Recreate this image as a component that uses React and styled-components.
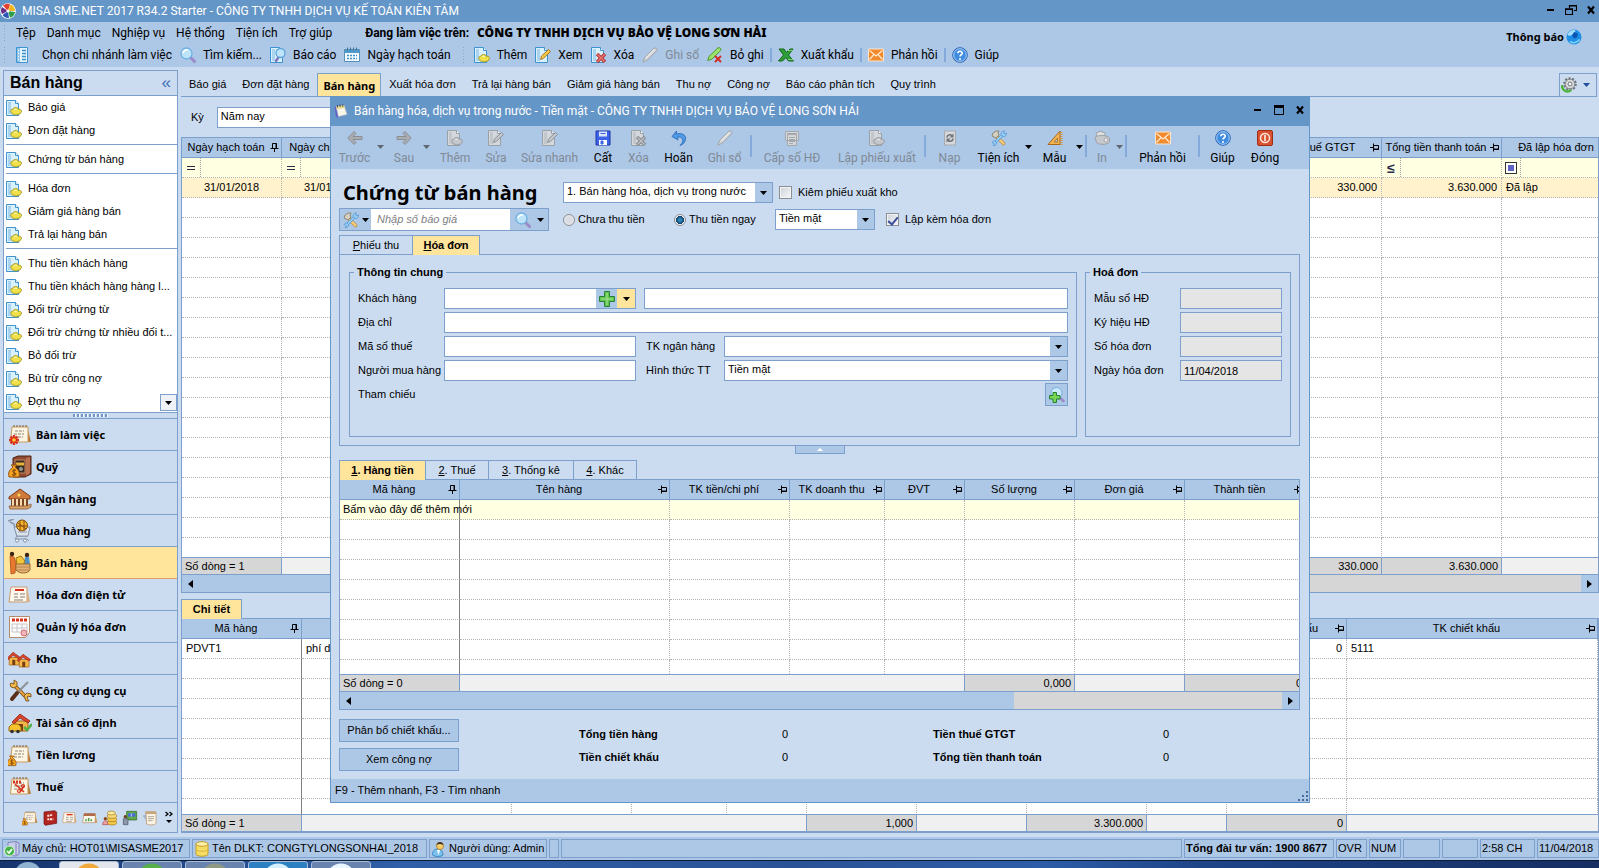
import React from 'react'
import styled, { createGlobalStyle, css } from 'styled-components'

/* ---------- icons ---------- */

const Svg = ({ size = 16, box = 16, children }) => (
    <svg width={size} height={size} viewBox={`0 0 ${box} ${box}`} aria-hidden="true">{children}</svg>
)

const tone = (gray) => gray
    ? { line: '#98A0A8', fill: '#D4D8DC', spot: '#C4C8CC', spotLine: '#93989D' }
    : { line: '#3E93CF', fill: '#D9F0FD', spot: '#F1E04A', spotLine: '#A39A22' }

const Page = ({ c }) => (
    <>
        <path d="M.5 .5h9l3 3v12h-12z" fill={c.fill} stroke={c.line} />
        <path d="M2 2h3v12H2z" fill={c.line} opacity=".3" />
        <path d="M9.500 .5v3h3" fill="#fff" stroke={c.line} />
    </>
)

const DocIcon = ({ gray }) => {
    const c = tone(gray)
    return (
        <Svg>
            <Page c={c} />
            <path d="M5 10.500c0-1 1-1.500 1.800-1.200C7.500 7 12 7 12.300 9.300c1.500-.3 3.200.5 3.200 1.900s-.7 1.300-1 1.500c-.3 1.600-1.800 1.800-2.600 1.400-.8 1.200-3.100 1.200-3.700 0C6.500 14.500 5.500 13.700 5.700 12.700 4.700 12 4.500 11 5 10.500z" fill={c.spot} stroke={c.spotLine} />
            <path d="M8 10c1-1 2-1 3 0" stroke="#fff" fill="none" opacity=".7" />
        </Svg>
    )
}

const EditDoc = ({ gray }) => (
    <Svg>
        <Page c={tone(gray)} />
        <path d="M5.500 12.500l1-3.500 7-6.500 2 2-7 6.800z" fill={gray ? '#C4C8CC' : '#F6C84A'} stroke={gray ? '#8C9196' : '#A67A26'} />
    </Svg>
)

const DeleteDoc = ({ gray }) => (
    <Svg>
        <Page c={tone(gray)} />
        <path d="M6 7l8 8M14 7l-8 8" stroke={gray ? '#85898D' : '#B73A3A'} strokeWidth="3.400" />
        <path d="M6.500 7.500l7 7M13.500 7.500l-7 7" stroke={gray ? '#C0C4C8' : '#E77A74'} strokeWidth="1.400" />
    </Svg>
)

const ListIcon = () => (
    <Svg>
        <path d="M1.500 .5h11v15h-11z" fill="#E4F3FD" stroke="#3E93CF" />
        <path d="M2 1h3v14H2z" fill="#8CC4EC" />
        <path d="M7 3.500h4M7 6.500h4M7 9.500h4M7 12.500h4" stroke="#3E8ECB" strokeWidth="1.400" />
        <path d="M3 3.500h1M3 6.500h1M3 9.500h1M3 12.500h1" stroke="#fff" strokeWidth="1.400" />
    </Svg>
)

const SearchIcon = () => (
    <Svg>
        <path d="M10.500 10.500l4 4" stroke="#9B8ACB" strokeWidth="3" strokeLinecap="round" />
        <circle cx="6.500" cy="6.500" r="5.500" fill="#BFE4FA" stroke="#6DB1E2" strokeWidth="1.300" />
        <path d="M3 6a4 4 0 0 1 5-3" stroke="#fff" strokeWidth="1.500" fill="none" />
    </Svg>
)

const ReportIcon = () => (
    <Svg>
        <Page c={tone()} />
        <path d="M9 9.500l-3 4.500" stroke="#8274BE" strokeWidth="2.400" strokeLinecap="round" />
        <circle cx="10.500" cy="6" r="4.500" fill="#BFE4FA" stroke="#5AA4DA" strokeWidth="1.300" />
    </Svg>
)

const CalendarIcon = () => (
    <Svg>
        <path d="M.5 2.500h15v12H.5z" fill="#F4FAFE" stroke="#5690B8" />
        <path d="M1 3h14v3H1z" fill="#4E9ACB" />
        <path d="M3.500 .5v3M6.500 .5v3M9.500 .5v3M12.500 .5v3" stroke="#3F7398" />
        <path d="M3 8.500h10M3 11.500h10" stroke="#3E93CF" strokeWidth="1.600" strokeDasharray="2 1" />
    </Svg>
)

const PencilIcon = () => (
    <Svg>
        <path d="M1 15l1.500-4.500L12 1c2-.5 3.200.8 2.800 2.600L5.300 13.200z" fill="#CFD2D5" stroke="#A0A5AA" />
        <path d="M4 11l8.500-8.500" stroke="#E8EAEC" strokeWidth="1.300" />
    </Svg>
)

const PencilX = () => (
    <Svg>
        <path d="M.8 13.500l1.200-4L11 .8c2-.5 3.200.8 2.800 2.600L5 12z" fill="#9BE36A" stroke="#4B9A2C" />
        <path d="M8 9l6 6M14 9l-6 6" stroke="#D22B23" strokeWidth="1.900" />
    </Svg>
)

const ExcelIcon = () => (
    <Svg>
        <path d="M1 2h5l2.500 3.500L12 2h3L10.500 8l5 6h-5L8 10.500 4.500 14H.5l5-6z" fill="#2E9E37" stroke="#14661D" />
        <path d="M9 3.500h6M10 12.500h5" stroke="#7FCB78" />
    </Svg>
)

const MailIcon = () => (
    <Svg>
        <path d="M.5 2h15v12H.5z" fill="#F08A2C" stroke="#FCE5CC" />
        <path d="M1.500 3.500L8 9l6.500-5.500M1.500 12.500l4.500-5M14.500 12.500l-4.500-5" fill="none" stroke="#FFE9D2" strokeWidth="1.200" />
    </Svg>
)

const HelpIcon = () => (
    <Svg>
        <circle cx="8" cy="8" r="7.300" fill="#3F8BE0" stroke="#2B62AE" />
        <circle cx="8" cy="8" r="6.300" fill="none" stroke="#A9D0FA" />
        <path d="M5.800 6.200C6 3.500 10.500 3.700 10.200 6.300 10 7.800 8 7.800 8 9.600" fill="none" stroke="#fff" strokeWidth="1.600" />
        <circle cx="8" cy="12" r="1" fill="#fff" />
    </Svg>
)

const ArrowIcon = ({ flip }) => (
    <Svg>
        <g transform={flip ? 'translate(16 0) scale(-1 1)' : undefined}>
            <path d="M.8 8L7 1.500 9 3.500 6 6.500h9v3H6l3 3-2 2z" fill="#A9ADB1" stroke="#8A8F94" />
        </g>
    </Svg>
)

const FloppyIcon = () => (
    <Svg>
        <path d="M1 1h14v14H1z" fill="#3D62E8" stroke="#1D35A8" />
        <path d="M4 1.500h8v5H4z" fill="#DCE6FB" />
        <path d="M4 10h8v5H4z" fill="#fff" />
        <path d="M5.500 3.500h5M6 11h2v3H6z" stroke="#3D62E8" fill="#3D62E8" />
    </Svg>
)

const UndoIcon = () => (
    <Svg>
        <path d="M5.500 1v3C11 2.500 15.500 5 14.500 9.500c-.5 3-2.500 5-5.500 6 2.500-2.500 3.500-4.500 2.500-6.500-1-1.800-3-2.300-5-1.700L7 10 1 6.500z" fill="#4E9AE6" stroke="#2766B4" strokeWidth=".8" />
    </Svg>
)

const SheetIcon = () => (
    <Svg>
        <path d="M1.500 1.500h13v9h-13zM3.500 4.500h9v11h-9z" fill="#D6D9DC" stroke="#A4A8AC" />
        <path d="M3 3.500h10M5 7.500h6M5 9.500h6M5 11.500h6M5 13.500h4" stroke="#A4A8AC" />
    </Svg>
)

const RefreshIcon = () => (
    <Svg>
        <path d="M2.500 1h11v14h-11z" fill="#D6D9DC" stroke="#A6AAAE" />
        <path d="M5 7.500C5 5 8 4 10 5.500M11 8.500c0 2.500-3 3.500-5 2" fill="none" stroke="#6F7479" strokeWidth="1.600" />
        <path d="M11.500 3.500v4h-4zM4.500 12.500v-4h4z" fill="#6F7479" />
    </Svg>
)

const ToolsIcon = () => (
    <Svg>
        <path d="M6.500 7.500l6 6" stroke="#C0924A" strokeWidth="3.600" strokeLinecap="round" />
        <path d="M6.500 7.500l6 6" stroke="#F6D07A" strokeWidth="2" strokeLinecap="round" />
        <path d="M1 6l1-3 3-2h3l-1 2 1 2-3 3-2-1z" fill="#D5CFC0" stroke="#857E6D" strokeWidth=".9" />
        <path d="M11 5.500L4.500 12" stroke="#4D96D4" strokeWidth="2.600" />
        <path d="M11 5.500L4.500 12" stroke="#A8D6F6" strokeWidth="1.200" />
        <path d="M10 4c0-2 2-3.500 3.500-3L12.500 3l1 1 2-1c.5 2-1.500 4-3.500 3.500zM1 12.500c1-2 4-2 4.500.5 0 2-2.500 3-3.500 2.500l1.500-1.500-1-1z" fill="#9CD0F4" stroke="#4D96D4" strokeWidth=".8" />
    </Svg>
)

const RulerIcon = () => (
    <Svg>
        <path d="M1 14.500L13 1v13.500z" fill="#F2B352" stroke="#A8691C" />
        <path d="M7 12l3.500-4v4z" fill="#ADC8E6" stroke="#A8691C" strokeWidth=".8" />
        <path d="M14.500 2v13" stroke="#D99435" strokeWidth="2" strokeDasharray="1 1" />
    </Svg>
)

const PrinterIcon = () => (
    <Svg>
        <path d="M3 7L2 3.500 6 1l5 2v4z" fill="#DDDFE1" stroke="#9DA1A5" />
        <path d="M1 7.500C3 5 13 4.500 15.500 8v4c-2 3-11 3-13 .5z" fill="#C6C9CC" stroke="#9DA1A5" />
        <circle cx="12" cy="10" r="2" fill="#E6E8EA" stroke="#A6AAAE" />
    </Svg>
)

const PowerIcon = () => (
    <Svg>
        <rect x=".5" y=".5" width="15" height="15" rx="1.500" fill="#D9512F" stroke="#9E2F17" />
        <circle cx="8" cy="8" r="4.500" fill="none" stroke="#FFE7DC" strokeWidth="1.500" />
        <path d="M8 5v6" stroke="#FFE7DC" strokeWidth="1.700" />
    </Svg>
)

const PlusIcon = () => (
    <Svg>
        <path d="M5.500 .5h5v5h5v5h-5v5h-5v-5h-5v-5h5z" fill="#62C44E" stroke="#258235" />
        <path d="M8 2v12M2 8h12" stroke="#A6E596" />
    </Svg>
)

const SearchPlus = () => (
    <Svg>
        <path d="M11 11l3.500 3" stroke="#9B8ACB" strokeWidth="2.600" strokeLinecap="round" />
        <circle cx="7.500" cy="6" r="5.500" fill="#C9E9FB" stroke="#76AFDB" />
        <path d="M4 5.500h3.500v3H11V12H7.500v3.500H4V12H.5V8.500H4z" fill="#7AD552" stroke="#258235" />
    </Svg>
)

const GlobeIcon = () => (
    <Svg>
        <circle cx="8" cy="8" r="7.500" fill="#1F8FE6" />
        <path d="M1.500 6C2 3 5 .8 8.500 1c2 1 0 3-2 4.500S3 7 1.500 6z" fill="#A6DDFB" />
        <path d="M8 3l4 1.500-1 4-3 1-2-3z" fill="#0D55B5" />
        <path d="M4 12.500c3 2 7 1.500 9.500-2" stroke="#7DD0FA" strokeWidth="1.600" fill="none" />
    </Svg>
)

const GearIcon = () => (
    <Svg>
        <circle cx="9" cy="7" r="5.800" fill="none" stroke="#6D7276" strokeWidth="2" strokeDasharray="2 1.600" />
        <circle cx="9" cy="7" r="4.800" fill="#DADCDE" stroke="#7C8084" />
        <circle cx="9" cy="7" r="2" fill="#F6F8FA" stroke="#6D7276" />
        <path d="M1 8c-.5 5 5 8.500 9 5" fill="none" stroke="#4FB43A" strokeWidth="2.400" />
    </Svg>
)

const LogoIcon = () => (
    <Svg size={16}>
        <circle cx="8" cy="8" r="7.800" fill="#fff" />
        <path d="M8 8L3 2.500A7 7 0 0 1 10 1.200z" fill="#E8402E" />
        <path d="M8 8l2.500-6.500A7 7 0 0 1 15 8z" fill="#F4B81E" />
        <path d="M8 8l7 1a7 7 0 0 1-5 5.800z" fill="#2F9E49" />
        <path d="M8 8l1 7a7 7 0 0 1-6.500-3z" fill="#2C59B8" />
        <path d="M8 8l-6 3a7 7 0 0 1 0-7z" fill="#6A2E86" />
        <circle cx="8" cy="8" r="1.600" fill="#fff" />
    </Svg>
)

const NotepadIcon = () => (
    <Svg size={14}>
        <path d="M.5 3.500l2 12 6-1-5-12z" fill="#5F62C8" />
        <path d="M2.500 3l9-1.500 3.500 10.500-10 2.500z" fill="#F8F8E8" stroke="#A9A9C8" strokeWidth=".8" />
        <path d="M2.500 3l9-1.500.8 3-9 1.600z" fill="#EADB8A" />
        <path d="M4 1v3M7 .5v3M10 .2v3" stroke="#38414A" />
    </Svg>
)

const ServerIcon = () => (
    <Svg>
        <path d="M4 1.500l8-1 3 1.500v11l-3 2-8-1z" fill="#C9CDEB" stroke="#7F84B8" />
        <path d="M12 1v13" stroke="#7F84B8" />
        <circle cx="5.500" cy="10" r="5" fill="#46B548" stroke="#DFF3DF" />
        <path d="M3 10l2 2 3-4" stroke="#fff" strokeWidth="1.700" fill="none" />
    </Svg>
)

const DbIcon = () => (
    <Svg>
        <path d="M2 3v10c0 3 12 3 12 0V3z" fill="#F5DC63" stroke="#C39D27" />
        <ellipse cx="8" cy="3" rx="6" ry="2.300" fill="#FCF0A8" stroke="#C39D27" />
        <path d="M2 8c0 3 12 3 12 0" fill="none" stroke="#D9B640" />
    </Svg>
)

const UserIcon = () => (
    <Svg>
        <path d="M1.500 14c0-4 2-6 5-6s5.500 2 5.500 6c-2 2-8 2-10.500 0z" fill="#7CC0EE" stroke="#3B87C4" />
        <circle cx="9" cy="5" r="3.500" fill="#F8CE6A" stroke="#A97C22" strokeWidth=".8" />
        <path d="M5.500 4C6 0 12 0 12.500 4 10 3 8 2.500 5.500 4z" fill="#3E3226" />
        <path d="M6 9l1.500 5L9 9z" fill="#fff" />
    </Svg>
)

const Caret = ({ color = '#000' }) => (
    <svg width="7" height="4" viewBox="0 0 7 4" aria-hidden="true"><path d="M0 0h7L3.500 4z" fill={color} /></svg>
)

const SideArrow = ({ flip }) => (
    <svg width="5" height="8" viewBox="0 0 5 8" aria-hidden="true">
        <path d={flip ? 'M0 0v8l5-4z' : 'M5 0v8L0 4z'} />
    </svg>
)

// upright when the column is frozen, lying on its side otherwise
const Pin = ({ fixed }) => (
    <svg width="9" height="9" viewBox="0 0 9 9" aria-hidden="true">
        {fixed
            ? <path d="M2.500 5.500v-5h4v5M6 0v6M.5 5.500h8M4.500 6v3" fill="none" stroke="#000" />
            : <path d="M3.500 2.500h5v4h-5M3 6h6M3.500 .5v8M0 4.500h3" fill="none" stroke="#000" />}
    </svg>
)

/* navigation pictures, 24 x 24 */

const Note = ({ children }) => (
    <>
        <path d="M19 3l4 16h-4z" fill="#B77A34" />
        <path d="M4 4h16v15H2.500z" fill="#FDF5E4" stroke="#C79A5E" />
        <path d="M6 4V2M9 4V2M12 4V2M15 4V2M18 4V2" stroke="#7A5A38" />
        <path d="M7 8h9M6 11h10M6 14h9" stroke="#8E8272" strokeDasharray="3 1" />
        {children}
    </>
)

const Bag = () => (
    <>
        <path d="M5 12l-2-2h6l-2 2c4 3 5 6 4 10H1c-1-4 0-7 4-10z" fill="#F5A623" stroke="#96500E" />
        <path d="M8 15.500c-2-1.500-4 0-3 1.500s3 .5 3 2-2.500 1.500-4 .5M6 14v7" fill="none" stroke="#7A3E08" />
    </>
)

const House = () => (
    <>
        <path d="M3 10h13v10H3z" fill="#F4B84A" stroke="#A8641C" />
        <path d="M0 11L8 3l10 7-2 2-8-5-6 6z" fill="#D9452B" stroke="#8E2312" strokeWidth=".8" />
        <path d="M7 13h4v7H7z" fill="#7A3E12" />
    </>
)

const navArt = {
    desk: <Note><path d="M6 12v10M1 17h10M2.500 13.500l7 7M9.500 13.500l-7 7" stroke="#D8321C" strokeWidth="2.400" /><circle cx="6" cy="17" r="1.800" fill="#FFC93C" /></Note>,
    safe: <><path d="M5 3l5-2h13v18l-6 3H5z" fill="#8E4B32" stroke="#4E2214" /><path d="M18 3l4-1v16l-4 3z" fill="#B9714E" /><path d="M7 5h10v13H7z" fill="#3A2A20" stroke="#C98A62" /><path d="M8 9h8" stroke="#E6B23C" strokeWidth="3" /><circle cx="13" cy="14" r="2" fill="#8D9A90" /><Bag /></>,
    bank: <><path d="M1 10L12 2l10 7v3H1z" fill="#D07A3C" stroke="#7E3C14" /><path d="M3 12h17v7H3z" fill="#7A4324" /><path d="M5 12v7M9 12v7M13 12v7M17 12v7" stroke="#F6DCAE" strokeWidth="2" /><path d="M1 19h18l4-2v3l-4 2H2z" fill="#D9A36B" stroke="#8E5730" strokeWidth=".8" /><circle cx="11" cy="8" r="1.500" fill="#FFD65A" /></>,
    cart: <><path d="M0 2l6-2M2 3l4 2 3 12h10l3-9" fill="none" stroke="#8B97AC" strokeWidth="1.600" /><path d="M6 8h16l-2 9H9z" fill="#DDE3EC" stroke="#8B97AC" /><circle cx="14" cy="6.500" r="5.500" fill="#F2B52B" stroke="#7A4A10" /><path d="M10 4l8 6M12 2v10M16 2v9M9 7h10" stroke="#8A4B10" /><path d="M10 13h9M9 17l-2 3h12l2 2" fill="none" stroke="#8B97AC" /><circle cx="9" cy="21.500" r="1.600" fill="#fff" stroke="#7E8FA8" /><circle cx="17" cy="21.500" r="1.600" fill="#fff" stroke="#7E8FA8" /></>,
    sell: <><circle cx="4" cy="3" r="2.200" fill="#3A2416" /><path d="M2 5l4 1 2 6-1 10-4 1z" fill="#E8782E" stroke="#9C4312" strokeWidth=".7" /><circle cx="19" cy="4" r="2.200" fill="#3A2416" /><path d="M17 6h4l1 7h-6z" fill="#4E93CE" /><path d="M8 7l5-2 4 5-2 4h-6z" fill="#F3C53A" stroke="#A37412" /><path d="M8 13h14v6c-2 4-11 4-14 0z" fill="#E2B274" stroke="#9A6630" /><path d="M9 16h12M9 19h12" stroke="#B9854C" /></>,
    einv: <><path d="M3 4h16v15H1z" fill="#FDF8EE" stroke="#C79A6E" /><path d="M19 4l3 15h-3z" fill="#D9B084" /><path d="M7 7h9" stroke="#D8321C" strokeWidth="2" /><path d="M6 11h4M12 11h5M6 14h4M12 14h5M6 17h9" stroke="#8A8078" /></>,
    inv: <><path d="M1.500 1.500h20v16l-4 5h-16z" fill="#FFFDFB" stroke="#B48A6C" /><path d="M4 5h15" stroke="#D8321C" strokeWidth="3" strokeDasharray="3 1" /><path d="M4 9h15v8H4zM4 13h15M9 9v8M14 9v8" fill="none" stroke="#C4C4CC" /><circle cx="16" cy="18" r="3" fill="#F3B6B8" stroke="#C96A70" /></>,
    stock: <><g transform="translate(-1 3) scale(.75)"><House /></g><g transform="translate(9 5) scale(.75)"><House /></g></>,
    tools: <><path d="M5 5l14 14" stroke="#7A4A1C" strokeWidth="3.800" /><path d="M5 5l14 14" stroke="#E9A13A" strokeWidth="2.200" /><path d="M2 5l1-1 3 1 0-4 3 2v4L6 9 3 8zM16 17l3-3 4 1 0 3-3-1-1 2 2 3-3 0z" fill="#F2B94C" stroke="#6E4414" strokeWidth=".8" /><path d="M20 3L9 14" stroke="#8C8F94" strokeWidth="2" /><path d="M9 14L4 20" stroke="#5A2E18" strokeWidth="4" strokeLinecap="round" /></>,
    asset: <><g transform="translate(4 0)"><House /></g><path d="M1 16l3-3h6l3 3v4H1z" fill="#F6C32E" stroke="#9A6A10" /><circle cx="4" cy="20.500" r="1.800" fill="#33302C" /><circle cx="10" cy="20.500" r="1.800" fill="#33302C" /><path d="M16 16l3 3 5-6" stroke="#53B04A" strokeWidth="2.500" fill="none" /></>,
    pay: <Note><g transform="translate(-1 5) scale(.8)"><Bag /></g></Note>,
    tax: <Note><path d="M5 7h9" stroke="#D8321C" strokeWidth="3" strokeDasharray="2 1" /><path d="M7 9l9 8M12 17l4-6" stroke="#D8321C" strokeWidth="1.600" /><circle cx="15" cy="11" r="1.500" fill="none" stroke="#D8321C" strokeWidth="1.200" /><circle cx="11" cy="16" r="1.500" fill="none" stroke="#D8321C" strokeWidth="1.200" /></Note>,
    book: <><path d="M3 3l16-2 3 2v17l-17 3-2-2z" fill="#B3231F" stroke="#6E100E" /><path d="M8 9l8-2M8 14h9" stroke="#FBE4DC" strokeWidth="3" strokeDasharray="3 1" /></>,
    chart: <><path d="M3 6h17v13H1z" fill="#FDF8EE" stroke="#B78A5E" /><path d="M3 5h17v4H2.500z" fill="#B06A4A" /><path d="M6 17v-3M10 17v-5M14 17v-3" stroke="#4E9E4A" strokeWidth="2.400" /><path d="M20 6l3 13h-4z" fill="#C99A64" /></>,
    coins: <><ellipse cx="15" cy="19" rx="7" ry="3.500" fill="#F6C94C" stroke="#9C7416" /><ellipse cx="15" cy="14" rx="7" ry="3.500" fill="#F6C94C" stroke="#9C7416" /><ellipse cx="15" cy="9" rx="7" ry="3.500" fill="#FADB78" stroke="#9C7416" /><ellipse cx="14" cy="4.500" rx="6" ry="3" fill="#FCE9A0" stroke="#9C7416" /><circle cx="5" cy="13" r="2.500" fill="#8A4A1C" /><path d="M1 22c0-8 8-8 8 0z" fill="#F0A0A0" stroke="#A84A4A" /></>,
    bus: <><path d="M7 2h15v13H7z" fill="#5FA84C" stroke="#2C6420" /><path d="M9 5h11v5H9z" fill="#4A6CD8" /><path d="M14 5v5" stroke="#fff" /><circle cx="5" cy="10" r="2.500" fill="#6E4320" /><path d="M2 13h7v9H2z" fill="#8E97A8" stroke="#4A5260" /></>,
    scroll: <><path d="M6 3h15v17c-1 3-12 3-14 1z" fill="#FBF4E4" stroke="#B28A5C" /><path d="M5 2h16v4H5z" fill="#C9A679" /><path d="M9 10h9M9 13h9M9 16h7" stroke="#8E8272" /><path d="M1 9l5-3v9z" fill="#A8B4C4" /></>,
}

/* ---------- data ---------- */

const menus = ['Tệp', 'Danh mục', 'Nghiệp vụ', 'Hệ thống', 'Tiện ích', 'Trợ giúp']

const pageTabs = ['Báo giá', 'Đơn đặt hàng', 'Bán hàng', 'Xuất hóa đơn', 'Trả lại hàng bán', 'Giảm giá hàng bán', 'Thu nợ', 'Công nợ', 'Báo cáo phân tích', 'Quy trình']

const linkGroups = [
    ['Báo giá', 'Đơn đặt hàng'],
    ['Chứng từ bán hàng'],
    ['Hóa đơn', 'Giảm giá hàng bán', 'Trả lại hàng bán'],
    ['Thu tiền khách hàng', 'Thu tiền khách hàng hàng l...', 'Đối trừ chứng từ', 'Đối trừ chứng từ nhiều đối t...', 'Bỏ đối trừ', 'Bù trừ công nợ', 'Đợt thu nợ'],
]

const navItems = [
    ['Bàn làm việc', 'desk'], ['Quỹ', 'safe'], ['Ngân hàng', 'bank'], ['Mua hàng', 'cart'],
    ['Bán hàng', 'sell'], ['Hóa đơn điện tử', 'einv'], ['Quản lý hóa đơn', 'inv'], ['Kho', 'stock'],
    ['Công cụ dụng cụ', 'tools'], ['Tài sản cố định', 'asset'], ['Tiền lương', 'pay'], ['Thuế', 'tax'],
]

const shortcuts = [['Giá thành', 'pay'], ['Tổng hợp', 'book'], ['Hợp đồng', 'einv'], ['Ngân sách', 'chart'], ['Cổ đông', 'coins'], ['Cửa hàng', 'bus'], ['Sổ sách', 'scroll']]

const dialogTools = [
    { label: 'Trước', icon: <ArrowIcon />, w: 45, off: true, menu: true },
    { label: 'Sau', icon: <ArrowIcon flip />, w: 38, off: true, menu: true },
    { label: 'Thêm', icon: <DocIcon gray />, w: 48, off: true },
    { label: 'Sửa', icon: <EditDoc gray />, w: 34, off: true },
    { label: 'Sửa nhanh', icon: <EditDoc gray />, w: 73, off: true },
    { label: 'Cất', icon: <FloppyIcon />, w: 34 },
    { label: 'Xóa', icon: <DeleteDoc gray />, w: 37, off: true },
    { label: 'Hoãn', icon: <UndoIcon />, w: 43 },
    { label: 'Ghi sổ', icon: <PencilIcon />, w: 49, off: true, end: true },
    { label: 'Cấp số HĐ', icon: <SheetIcon />, w: 78, off: true },
    { label: 'Lập phiếu xuất', icon: <DocIcon gray />, w: 92, off: true, end: true },
    { label: 'Nạp', icon: <RefreshIcon />, w: 45, off: true },
    { label: 'Tiện ích', icon: <ToolsIcon />, w: 53, menu: true },
    { label: 'Mẫu', icon: <RulerIcon />, w: 43, menu: true, end: true },
    { label: 'In', icon: <PrinterIcon />, w: 28, off: true, menu: true, end: true },
    { label: 'Phản hồi', icon: <MailIcon />, w: 69, end: true },
    { label: 'Giúp', icon: <HelpIcon />, w: 43 },
    { label: 'Đóng', icon: <PowerIcon />, w: 42 },
]

const saleCols = [
    { title: 'Ngày hạch toán', w: 100, fixed: true },
    { title: 'Ngày chứng từ', w: 100 },
    { title: '' },
    { title: 'Tiền thuế GTGT', w: 120 },
    { title: 'Tổng tiền thanh toán', w: 120 },
    { title: 'Đã lập hóa đơn', w: 120 },
]

const detailCols = [
    { title: 'Mã hàng', w: 120, fixed: true, frozen: true },
    { title: '', w: 210 },
    { title: '', w: 120 }, { title: '', w: 95 }, { title: '', w: 80 }, { title: '', w: 110 },
    { title: '', w: 110 }, { title: '', w: 120 }, { title: '', w: 80 },
    { title: 'Tiền chiết khấu', w: 120 },
    { title: 'TK chiết khấu' },
]

const itemCols = [
    { title: 'Mã hàng', w: 120, fixed: true, frozen: true },
    { title: 'Tên hàng' },
    { title: 'TK tiền/chi phí', w: 120 },
    { title: 'TK doanh thu', w: 95 },
    { title: 'ĐVT', w: 80 },
    { title: 'Số lượng', w: 110 },
    { title: 'Đơn giá', w: 110 },
    { title: 'Thành tiền', w: 121 },
]

/* ---------- data grid ---------- */

const DataGrid = ({ cols, rows = [], blanks, footer, filter, hint, scroll, over = 0, ...rest }) => {
    const group = (
        <colgroup>
            {cols.map((c, i) => <col key={i} width={c.w} />)}
        </colgroup>
    )
    const has = (i) => footer[i] !== undefined
    return (
        <GridBox {...rest}>
            <GridView>
                <GridTable $over={over}>
                    {group}
                    <thead>
                        <tr>
                            {cols.map((c, i) => (
                                <Th key={i}>
                                    <HeadCell><span>{c.title}</span>{c.title && <Pin fixed={c.fixed} />}</HeadCell>
                                </Th>
                            ))}
                        </tr>
                    </thead>
                    <tbody>
                        {filter && (
                            <Tr $bg="#FFFFE1">
                                {cols.map((c, i) => <Td key={i}><FilterCell><i>{filter[i]}</i></FilterCell></Td>)}
                            </Tr>
                        )}
                        {hint && (
                            <Tr $bg="#FFFFE1">
                                {cols.map((c, i) => <Td key={i} $frozen={c.frozen} $hint>{i === 0 && hint}</Td>)}
                            </Tr>
                        )}
                        {rows.map((r, n) => (
                            <Tr key={n} $bg={filter && '#FFF2CC'}>
                                {cols.map((c, i) => <Td key={i} $frozen={c.frozen} $align={r[i]?.align}>{r[i]?.text}</Td>)}
                            </Tr>
                        ))}
                        {Array.from({ length: blanks }, (_, n) => (
                            <Tr key={`b${n}`}>
                                {cols.map((c, i) => <Td key={i} $frozen={c.frozen} />)}
                            </Tr>
                        ))}
                    </tbody>
                </GridTable>
            </GridView>
            <GridFoot>
                <GridTable $over={over}>
                    {group}
                    <tbody>
                        <tr>
                            {cols.map((c, i) => <FootTd key={i} $sum={has(i)} $edge={has(i) || has(i + 1)} $left={i === 0}>{footer[i]}</FootTd>)}
                        </tr>
                    </tbody>
                </GridTable>
            </GridFoot>
            {scroll && (
                <ScrollBar>
                    <ScrollBtn aria-label="Cuộn trái"><SideArrow /></ScrollBtn>
                    <ScrollTrack $from={scroll} />
                    <ScrollBtn aria-label="Cuộn phải"><SideArrow flip /></ScrollBtn>
                </ScrollBar>
            )}
        </GridBox>
    )
}

const Combo = ({ value, id, label, $w }) => (
    <ComboBox $w={$w}>
        <select id={id} aria-label={label} defaultValue={value}>
            <option>{value}</option>
        </select>
        <ComboArrow><Caret /></ComboArrow>
    </ComboBox>
)

/* ---------- parts of the page ---------- */

const Sidebar = () => (
    <Side>
        <SideHead><h2>Bán hàng</h2><button aria-label="Thu gọn">«</button></SideHead>
        <SideList>
            {linkGroups.map((g, i) => (
                <ul key={i}>
                    {g.map((t) => <li key={t}><a href="#"><DocIcon />{t}</a></li>)}
                </ul>
            ))}
            <MoreBtn aria-label="Xem thêm"><Caret /></MoreBtn>
        </SideList>
        <Splitter><span /></Splitter>
        {navItems.map(([t, art]) => (
            <NavBtn key={t} $active={t === 'Bán hàng'}><Svg size={24} box={24}>{navArt[art]}</Svg>{t}</NavBtn>
        ))}
        <Shortcuts>
            {shortcuts.map(([t, art]) => <button key={t} aria-label={t}><Svg box={24}>{navArt[art]}</Svg></button>)}
            <button aria-label="Tùy chọn">
                <svg width="8" height="14" viewBox="0 0 8 14"><path d="M.5 1l2.500 2L.5 5M4.500 1L7 3 4.500 5" fill="none" stroke="#000" strokeWidth="1.300" /><path d="M1 9h6l-3 3z" /></svg>
            </button>
        </Shortcuts>
    </Side>
)

const SaleDialog = () => (
    <Dialog role="dialog" aria-label="Chứng từ bán hàng">
        <DialogTitle>
            <NotepadIcon />
            <span>Bán hàng hóa, dịch vụ trong nước - Tiền mặt - CÔNG TY TNHH DỊCH VỤ BẢO VỆ LONG SƠN HẢI</span>
            <WinButtons max gap />
        </DialogTitle>
        <DialogTools>
            {dialogTools.map((t) => (
                <React.Fragment key={t.label}>
                    <ToolBtn $w={t.w} disabled={t.off}>{t.icon}{t.label}</ToolBtn>
                    {t.menu && <ToolCaret aria-label={`${t.label} - thêm`}><Caret color={t.off ? '#5F676F' : '#000'} /></ToolCaret>}
                    {t.end && <ToolSep />}
                </React.Fragment>
            ))}
        </DialogTools>
        <DialogBody>
            <HeadRow>
                <h1>Chứng từ bán hàng</h1>
                <Combo value="1. Bán hàng hóa, dịch vụ trong nước" label="Loại chứng từ" $w={210} />
                <Check><input type="checkbox" />Kiêm phiếu xuất kho</Check>
            </HeadRow>
            <OptionRow>
                <Lookup>
                    <button aria-label="Tiện ích"><ToolsIcon /><Caret /></button>
                    <input placeholder="Nhập số báo giá" aria-label="Số báo giá" />
                    <button aria-label="Tìm"><SearchIcon /><Caret /></button>
                </Lookup>
                <Radio><input type="radio" name="pay" />Chưa thu tiền</Radio>
                <Radio><input type="radio" name="pay" defaultChecked />Thu tiền ngay</Radio>
                <Combo value="Tiền mặt" label="Phương thức thanh toán" $w={100} />
                <Check><input type="checkbox" defaultChecked />Lập kèm hóa đơn</Check>
            </OptionRow>
            <Tabs>
                <Tab $w={74}><u>P</u>hiếu thu</Tab>
                <Tab $w={67} $active><u>H</u>óa đơn</Tab>
            </Tabs>
            <Panel>
                <Group>
                    <legend>Thông tin chung</legend>
                    <CustomerGrid>
                        <label htmlFor="kh">Khách hàng</label>
                        <Picker>
                            <input id="kh" />
                            <button aria-label="Thêm khách hàng"><PlusIcon /></button>
                            <button aria-label="Chọn khách hàng"><Caret /></button>
                        </Picker>
                        <Field $from={4} aria-label="Tên khách hàng" />
                        <label htmlFor="dc">Địa chỉ</label>
                        <Field id="dc" $from={2} />
                        <label htmlFor="mst">Mã số thuế</label>
                        <Field id="mst" />
                        <SecondLabel htmlFor="tk">TK ngân hàng</SecondLabel>
                        <Combo id="tk" value="" />
                        <label htmlFor="nm">Người mua hàng</label>
                        <Field id="nm" />
                        <SecondLabel htmlFor="ht">Hình thức TT</SecondLabel>
                        <Combo id="ht" value="Tiền mặt" />
                        <span>Tham chiếu</span>
                        <RefBtn aria-label="Chọn tham chiếu"><SearchPlus /></RefBtn>
                    </CustomerGrid>
                </Group>
                <Group>
                    <legend>Hoá đơn</legend>
                    <InvoiceGrid>
                        <label htmlFor="ms">Mẫu số HĐ</label>
                        <Field id="ms" readOnly />
                        <label htmlFor="ky">Ký hiệu HĐ</label>
                        <Field id="ky" readOnly />
                        <label htmlFor="so">Số hóa đơn</label>
                        <Field id="so" readOnly />
                        <label htmlFor="ng">Ngày hóa đơn</label>
                        <Field id="ng" readOnly defaultValue="11/04/2018" />
                    </InvoiceGrid>
                </Group>
            </Panel>
            <Collapse aria-label="Thu gọn"><svg width="6" height="3" viewBox="0 0 6 3"><path d="M0 3h6L3 0z" fill="#fff" /></svg></Collapse>
            <Tabs>
                <Tab $w={87} $active><u>1</u>. Hàng tiền</Tab>
                <Tab $w={63}><u>2</u>. Thuế</Tab>
                <Tab $w={85}><u>3</u>. Thống kê</Tab>
                <Tab $w={63}><u>4</u>. Khác</Tab>
            </Tabs>
            <DataGrid
                $grow
                cols={itemCols}
                hint="Bấm vào đây để thêm mới"
                blanks={8}
                over={7}
                scroll={71}
                footer={{ 0: 'Số dòng = 0', 5: '0,000', 7: '0' }}
            />
            <Totals>
                <TotalButtons>
                    <button>Phân bổ chiết khấu...</button>
                    <button>Xem công nợ</button>
                </TotalButtons>
                <dl>
                    <div><dt>Tổng tiền hàng</dt><dd>0</dd></div>
                    <div><dt>Tiền chiết khấu</dt><dd>0</dd></div>
                </dl>
                <dl>
                    <div><dt>Tiền thuế GTGT</dt><dd>0</dd></div>
                    <div><dt>Tổng tiền thanh toán</dt><dd>0</dd></div>
                </dl>
            </Totals>
        </DialogBody>
        <DialogStatus>
            <span>F9 - Thêm nhanh, F3 - Tìm nhanh</span>
            <svg width="12" height="12" viewBox="0 0 12 12"><path d="M9 1h2v2H9zM5 5h2v2H5zM9 5h2v2H9zM1 9h2v2H1zM5 9h2v2H5zM9 9h2v2H9z" fill="#4A6A9C" /></svg>
        </DialogStatus>
    </Dialog>
)

const WinButtons = ({ max, gap }) => (
    <WinBox $gap={gap}>
        <button aria-label="Thu nhỏ"><svg width="12" height="12" viewBox="0 0 12 12"><path d="M2 5h7v2H2z" /></svg></button>
        <button aria-label="Phóng to">
            {max
                ? <svg width="12" height="12" viewBox="0 0 12 12"><path d="M1.500 2v8.500h9V2z" fill="none" stroke="#000" /><path d="M1 1h10v3H1z" /></svg>
                : <svg width="12" height="12" viewBox="0 0 12 12"><path d="M4.500 4V1.500h7v5H9M.5 5h7v5.500h-7z" fill="none" stroke="#000" strokeWidth="1.200" /><path d="M4 1h8v1.500H4zM0 4.500h8V6H0z" /></svg>}
        </button>
        <button aria-label="Đóng"><svg width="12" height="12" viewBox="0 0 12 12"><path d="M3 2.500l6 7M9 2.500l-6 7" stroke="#000" strokeWidth="2.200" /></svg></button>
    </WinBox>
)

const App = () => (
    <Page100>
        <Global />
        <TitleBar>
            <LogoIcon />
            <span>MISA SME.NET 2017 R34.2 Starter - CÔNG TY TNHH DỊCH VỤ KẾ TOÁN KIÊN TÂM</span>
            <WinButtons />
        </TitleBar>
        <Bars>
            <div>
                <MenuBar>
                    <Grip />
                    {menus.map((m) => <button key={m}>{m}</button>)}
                    <Branch>Đang làm việc trên:<b>CÔNG TY TNHH DỊCH VỤ BẢO VỆ LONG SƠN HẢI</b></Branch>
                </MenuBar>
                <ToolBar>
                    <Grip />
                    <button><ListIcon />Chọn chi nhánh làm việc</button>
                    <button><SearchIcon />Tìm kiếm...</button>
                    <button><ReportIcon />Báo cáo</button>
                    <button><CalendarIcon />Ngày hạch toán</button>
                    <Grip />
                    <button><DocIcon />Thêm</button>
                    <button><EditDoc />Xem</button>
                    <button><DeleteDoc />Xóa</button>
                    <button disabled><PencilIcon />Ghi sổ</button>
                    <button><PencilX />Bỏ ghi</button>
                    <BarSep />
                    <button><ExcelIcon />Xuất khẩu</button>
                    <BarSep />
                    <button><MailIcon />Phản hồi</button>
                    <BarSep />
                    <button><HelpIcon />Giúp</button>
                </ToolBar>
            </div>
            <Notice href="#">Thông báo<GlobeIcon /></Notice>
        </Bars>
        <Main>
            <Sidebar />
            <Content>
                <PageTabs>
                    {pageTabs.map((t) => <PageTab key={t} $active={t === 'Bán hàng'}>{t}</PageTab>)}
                    <GearBtn aria-label="Thiết lập"><GearIcon /><Caret color="#1F4E9E" /></GearBtn>
                </PageTabs>
                <Period>
                    <label htmlFor="period">Kỳ</label>
                    <Combo id="period" value="Năm nay" $w={180} />
                </Period>
                <DataGrid
                    $grow
                    cols={saleCols}
                    filter={{ 0: <Equal />, 1: <Equal />, 4: '≤', 5: <BoolMark /> }}
                    rows={[{
                        0: { text: '31/01/2018', align: 'center' },
                        1: { text: '31/01/2018', align: 'center' },
                        3: { text: '330.000', align: 'right' },
                        4: { text: '3.630.000', align: 'right' },
                        5: { text: 'Đã lập' },
                    }]}
                    blanks={18}
                    over={24}
                    scroll={60}
                    footer={{ 0: 'Số dòng = 1', 3: '330.000', 4: '3.630.000' }}
                />
                <DetailTabs><Tab $w={61} $active>Chi tiết</Tab></DetailTabs>
                <DataGrid
                    cols={detailCols}
                    rows={[{
                        0: { text: 'PDVT1' },
                        1: { text: 'phí dịch vụ' },
                        9: { text: '0', align: 'right' },
                        10: { text: '5111' },
                    }]}
                    blanks={8}
                    footer={{ 0: 'Số dòng = 1', 5: '1,000', 7: '3.300.000', 9: '0' }}
                />
            </Content>
            <SaleDialog />
        </Main>
        <StatusBar>
            <Pane $w={188}><ServerIcon />Máy chủ: HOT01\MISASME2017</Pane>
            <Pane $w={235}><DbIcon />Tên DLKT: CONGTYLONGSONHAI_2018</Pane>
            <Pane $w={118}><UserIcon />Người dùng: Admin</Pane>
            <Pane $w={10} />
            <Pane $fill />
            <Pane $w={150}><b>Tổng đài tư vấn: 1900 8677</b></Pane>
            <Pane $w={31}>OVR</Pane>
            <Pane $w={32}>NUM</Pane>
            <Pane $w={37} />
            <Pane $w={36} />
            <Pane $w={55}>2:58 CH</Pane>
            <Pane $w={62}>11/04/2018</Pane>
        </StatusBar>
        <TaskBar>
            <Orb />
            <Task $c="#F0A83A" $lit />
            <Task $c="#58B04A" />
            <Task $c="#8E9A84" />
            <Task $c="#D6F0FF" $sky />
            <Task $c="#EAF6FF" />
        </TaskBar>
    </Page100>
)

export default App

/* ---------- styles ---------- */

const ui = 'Roboto, "Noto Sans", sans-serif'
const line = '#7C9FCB'
const bar = '#ADC7E6'
const pale = '#CBDCF1'
const gold = '#FFE49C'

const Global = createGlobalStyle`
* { box-sizing: border-box; }
body {
    margin: 0;
    background: ${pale};
    font: 11px/15px "Liberation Sans", Arial, sans-serif;
    color: #000;
}
button, input, select {
    margin: 0;
    padding: 0;
    border: 0;
    border-radius: 0;
    background: none;
    font: inherit;
    color: inherit;
}
svg { display: block; flex: none; }
h1, h2, ul, dl, dd { margin: 0; padding: 0; }
a { color: inherit; text-decoration: none; }
`

const Page100 = styled.div`
    display: flex;
    flex-direction: column;
    height: 100vh;
    overflow: hidden;
`

const TitleBar = styled.header`
    display: flex;
    align-items: center;
    gap: 6px;
    height: 22px;
    flex: none;
    background: #6596C8;
    color: #fff;
    font: 12px/16px ${ui};
    span { flex: 1; }
`

const WinBox = styled.div`
    display: flex;
    gap: ${(p) => (p.$gap ? 9 : 8)}px;
    padding-right: 2px;
    padding-bottom: 3px;
`

const Bars = styled.div`
    display: flex;
    justify-content: space-between;
    height: 45px;
    flex: none;
    background: ${bar};
`

const MenuBar = styled.nav`
    display: flex;
    align-items: center;
    gap: 11px;
    height: 22px;
    font: 12px/16px ${ui};
`

const Branch = styled.strong`
    display: flex;
    gap: 8px;
    margin-left: 22px;
    b { font-family: "Noto Sans", sans-serif; }
`

const ToolBar = styled.div`
    display: flex;
    align-items: center;
    gap: 8px;
    height: 22px;
    font: 12px/16px ${ui};
    button {
        display: flex;
        align-items: center;
        gap: 7px;
        white-space: nowrap;
    }
    button:first-of-type { gap: 11px; }
    button:disabled { color: #7F8A96; }
`

const Grip = styled.span`
    width: 4px;
    height: 18px;
    margin-left: 3px;
    background: radial-gradient(#8AA5C8 1px, transparent 1px) 0 0 / 3px 3px;
    ${MenuBar} & { margin-right: -2px; }
`

const BarSep = styled.span`
    width: 2px;
    height: 14px;
    margin: 0 -2px;
    background: #84A9DA;
`

const Notice = styled.a`
    display: flex;
    align-items: center;
    gap: 2px;
    height: 29px;
    padding-right: 17px;
    font: bold 11px/15px "Noto Sans", sans-serif;
`

const Main = styled.main`
    position: relative;
    display: flex;
    flex: 1;
    min-height: 0;
    padding: 3px 0 4px 3px;
    gap: 3px;
`

const Side = styled.aside`
    display: flex;
    flex-direction: column;
    width: 175px;
    flex: none;
    border: 1px solid ${line};
`

const SideHead = styled.div`
    display: flex;
    align-items: center;
    justify-content: space-between;
    height: 25px;
    padding: 0 6px;
    border-bottom: 1px solid ${line};
    h2 { font-size: 16px; line-height: 20px; }
    button { font-size: 17px; line-height: 18px; color: #3D6FB6; }
`

const SideList = styled.div`
    position: relative;
    flex: 1;
    background: #fff;
    overflow: hidden;
    ul {
        list-style: none;
        margin-left: 2px;
    }
    ul + ul {
        margin-top: 2px;
        padding-top: 3px;
        border-top: 1px solid ${line};
    }
    a {
        display: flex;
        align-items: center;
        gap: 6px;
        height: 23px;
        white-space: nowrap;
    }
`

// sits over the last link of the list
const MoreBtn = styled.button`
    position: absolute;
    right: 0;
    bottom: 1px;
    width: 17px;
    height: 17px;
    display: grid;
    place-items: center;
    border: 1px solid ${line};
    background: #EEF1F5;
`

const Splitter = styled.div`
    display: grid;
    place-items: center;
    height: 7px;
    flex: none;
    border: solid ${line};
    border-width: 1px 0;
    span {
        width: 36px;
        height: 3px;
        background: repeating-linear-gradient(90deg, #6F95C9 0 2px, #fff 2px 3px, transparent 3px 4px);
    }
`

const NavBtn = styled.button`
    display: flex;
    align-items: center;
    gap: 4px;
    height: 32px;
    flex: none;
    padding-left: 4px;
    border-bottom: 1px solid ${(p) => (p.$active ? '#E0A16E' : line)};
    background: ${(p) => (p.$active ? gold : pale)};
    font: bold 11px/15px "Noto Sans", sans-serif;
`

const Shortcuts = styled.div`
    display: flex;
    align-items: center;
    justify-content: flex-end;
    gap: 4px;
    height: 29px;
    flex: none;
    padding-right: 4px;
    button:last-child { margin-left: 3px; }
`

const Content = styled.section`
    display: flex;
    flex-direction: column;
    flex: 1;
    min-width: 0;
`

const PageTabs = styled.div`
    display: flex;
    height: 27px;
    flex: none;
    padding-top: 3px;
    margin-right: 2px;
    border-bottom: 1px solid ${line};
`

const PageTab = styled.button`
    padding: 0 8px;
    white-space: nowrap;
    ${(p) => p.$active && css`
        padding: 0 5px;
        border: 1px solid ${line};
        border-bottom: 0;
        background: ${gold};
        font: bold 11px/15px "Noto Sans", sans-serif;
    `}
`

const GearBtn = styled.button`
    display: flex;
    align-items: center;
    gap: 6px;
    margin-left: auto;
    padding: 0 6px 0 1px;
    border: 1px solid ${line};
    border-bottom: 0;
`

const Period = styled.div`
    display: flex;
    align-items: center;
    gap: 13px;
    height: 40px;
    flex: none;
    padding-left: 10px;
`

const ComboBox = styled.div`
    display: grid;
    grid-template-columns: 1fr 17px;
    width: ${(p) => (p.$w ? `${p.$w}px` : 'auto')};
    height: 21px;
    border: 1px solid ${line};
    background: #fff;
    select {
        grid-area: 1 / 1 / 2 / 3;
        appearance: none;
        padding: 0 18px 2px 3px;
        outline: 0;
    }
`

const ComboArrow = styled.span`
    grid-area: 1 / 2;
    display: grid;
    place-items: center;
    background: ${bar};
    pointer-events: none;
`

const GridBox = styled.div`
    display: flex;
    flex-direction: column;
    flex: ${(p) => (p.$grow ? '1 1 0' : '0 0 215px')};
    min-height: 0;
    border: 1px solid ${line};
    border-width: 1px 1px ${(p) => (p.$grow ? 1 : 2)}px 1px;
`

const GridView = styled.div`
    flex: 1;
    min-height: 0;
    overflow: hidden;
    background: #fff;
`

const GridFoot = styled.div`
    height: 17px;
    flex: none;
    overflow: hidden;
    border-top: 1px solid ${line};
`

const GridTable = styled.table`
    width: ${(p) => `calc(100% + ${p.$over}px)`};
    table-layout: fixed;
    border-spacing: 0;
`

const Th = styled.th`
    height: 20px;
    padding: 0 2px 0 0;
    border: solid ${line};
    border-width: 0 1px 1px 0;
    background: ${bar};
    font-weight: normal;
`

const HeadCell = styled.div`
    display: flex;
    align-items: center;
    white-space: nowrap;
    span { flex: 1; }
`

const Tr = styled.tr`
    background: ${(p) => p.$bg || '#fff'};
`

const Td = styled.td`
    height: 20px;
    padding: 0 ${(p) => (p.$hint ? 3 : 4)}px;
    border: dotted #B4B4B4;
    border-width: 0 1px 1px 0;
    text-align: ${(p) => p.$align || 'left'};
    white-space: nowrap;
    ${(p) => p.$frozen && 'border-right: 1px solid #7F7F7F;'}
`

const FootTd = styled.td`
    height: 16px;
    padding: 0 3px;
    border-right: 1px solid ${(p) => (p.$edge ? line : '#F0F0F0')};
    background: ${(p) => (p.$sum ? '#D6D6D6' : '#F0F0F0')};
    text-align: ${(p) => (p.$left ? 'left' : 'right')};
`

const FilterCell = styled.div`
    display: flex;
    height: 19px;
    margin-left: -4px;
    i {
        display: grid;
        place-items: center;
        width: 19px;
        border-right: 1px dotted #A0A0A0;
        font: bold 14px/14px "Liberation Sans", sans-serif;
        color: #2B2B4A;
    }
    i:empty { display: none; }
`

const Equal = styled.span`
    width: 8px;
    height: 4px;
    border: solid #2B2B4A;
    border-width: 1px 0;
`

const BoolMark = styled.span`
    width: 12px;
    height: 12px;
    border: 1px solid #333;
    background: #5F64C4;
    box-shadow: inset 0 0 0 2px #fff;
`

const ScrollBar = styled.div`
    display: flex;
    height: 18px;
    flex: none;
    border-top: 1px solid ${line};
    background: ${bar};
`

const ScrollBtn = styled.button`
    display: grid;
    place-items: center;
    width: 17px;
`

const ScrollTrack = styled.div`
    flex: 1;
    background: linear-gradient(90deg, ${bar} ${(p) => p.$from}%, #D6D6D6 ${(p) => p.$from}%);
`

const Tabs = styled.div`
    display: flex;
    height: 19px;
    flex: none;
`

const DetailTabs = styled(Tabs)`
    margin-top: 6px;
`

const Tab = styled.button`
    width: ${(p) => p.$w}px;
    height: ${(p) => (p.$active ? 20 : 19)}px;
    border: 1px solid ${line};
    border-bottom: 0;
    background: ${(p) => (p.$active ? gold : pale)};
    font-weight: ${(p) => (p.$active ? 'bold' : 'normal')};
    white-space: nowrap;
    z-index: 1;
    & + & { border-left: 0; }
`

// floating window over the main workspace
const Dialog = styled.section`
    position: absolute;
    top: 29px;
    right: 289px;
    bottom: 34px;
    left: 330px;
    display: flex;
    flex-direction: column;
    border: 1px solid #6596C8;
    border-top: 0;
    background: ${pale};
    z-index: 2;
`

const DialogTitle = styled.div`
    display: flex;
    align-items: center;
    gap: 6px;
    height: 30px;
    flex: none;
    padding: 0 1px 0 3px;
    background: #6596C8;
    color: #fff;
    font: 12px/16px ${ui};
    span { flex: 1; white-space: nowrap; }
`

const DialogTools = styled.div`
    display: flex;
    height: 43px;
    flex: none;
    padding: 4px 0 0 1px;
    background: ${bar};
    font: 12px/16px ${ui};
`

const ToolBtn = styled.button`
    display: flex;
    flex-direction: column;
    align-items: center;
    gap: 4px;
    width: ${(p) => p.$w}px;
    flex: none;
    white-space: nowrap;
    &:disabled { color: #7F8A96; }
`

const ToolCaret = styled.button`
    width: 8px;
    height: 34px;
`

const ToolSep = styled.span`
    width: 2px;
    height: 22px;
    margin: 5px 1px;
    background: #84A9DA;
`

const DialogBody = styled.div`
    display: flex;
    flex-direction: column;
    flex: 1;
    min-height: 0;
    padding: 13px 9px 0 8px;
`

const HeadRow = styled.div`
    display: grid;
    grid-template-columns: 224px 216px auto;
    align-items: center;
    height: 21px;
    flex: none;
    h1 {
        padding-left: 4px;
        font: bold 20px/19px "Noto Sans", sans-serif;
        white-space: nowrap;
    }
`

const OptionRow = styled.div`
    display: grid;
    grid-template-columns: 224px 111px 101px 111px auto;
    align-items: center;
    height: 23px;
    flex: none;
    margin: 5px 0 4px;
`

const Lookup = styled.div`
    display: flex;
    width: 210px;
    height: 23px;
    border: 1px solid ${line};
    background: ${bar};
    button {
        display: flex;
        align-items: center;
        justify-content: center;
        gap: 3px;
        width: 31px;
    }
    button:last-child { width: 38px; gap: 6px; }
    input {
        flex: 1;
        min-width: 0;
        padding-left: 6px;
        background: #fff;
    }
    input::placeholder { color: #808080; font-style: italic; }
`

const Check = styled.label`
    display: flex;
    align-items: center;
    gap: 6px;
    input {
        appearance: none;
        display: grid;
        place-items: center;
        width: 13px;
        height: 13px;
        border: 1px solid #8A8F96;
        background: linear-gradient(135deg, #CDD2DA, #F6F7F9);
        box-shadow: inset 0 0 0 1px #F4F4F4;
    }
    input:checked::before {
        content: '';
        width: 4px;
        height: 8px;
        border: solid #3C4F9A;
        border-width: 0 2px 2px 0;
        transform: rotate(40deg);
    }
`

const Radio = styled.label`
    display: flex;
    align-items: center;
    gap: 3px;
    input {
        appearance: none;
        width: 12px;
        height: 12px;
        border: 1px solid #8A8F96;
        border-radius: 50%;
        background: radial-gradient(circle, #DADDE2 40%, #F6F6F6);
    }
    input:checked { background: radial-gradient(circle, #2E8AC0 1px, #123F66 4px, #F6F6F6 4px); }
`

const Panel = styled.div`
    display: grid;
    grid-template-columns: 1fr 206px;
    gap: 8px;
    height: 192px;
    flex: none;
    padding: 11px 8px 8px 9px;
    border: 1px solid ${line};
`

const Group = styled.fieldset`
    min-width: 0;
    margin: 0;
    padding: 9px 8px 0;
    border: 1px solid ${line};
    legend {
        margin-left: -4px;
        padding: 0 3px;
        font-weight: bold;
        line-height: 13px;
    }
`

const FormGrid = styled.div`
    display: grid;
    grid-auto-rows: 21px;
    row-gap: 3px;
    align-items: center;
    label, span { white-space: nowrap; }
`

const CustomerGrid = styled(FormGrid)`
    grid-template-columns: 86px 192px 8px 80px 1fr;
`

const InvoiceGrid = styled(FormGrid)`
    grid-template-columns: 86px 1fr;
`

const SecondLabel = styled.label`
    grid-column: 4;
    padding-left: 2px;
`

const Field = styled.input`
    width: 100%;
    height: 21px;
    padding: 0 3px;
    border: 1px solid ${line};
    background: ${(p) => (p.readOnly ? '#E5E5E5' : '#fff')};
    ${(p) => p.$from && `grid-column: ${p.$from} / 6;`}
`

const Picker = styled.div`
    display: flex;
    height: 21px;
    border: 1px solid ${line};
    background: #fff;
    input { flex: 1; min-width: 0; padding: 0 3px; }
    button {
        display: grid;
        place-items: center;
        width: 21px;
        background: ${bar};
    }
    button:last-child { width: 18px; background: ${gold}; }
`

const RefBtn = styled.button`
    grid-column: 5;
    justify-self: end;
    display: grid;
    place-items: center;
    width: 23px;
    height: 23px;
    border: 1px solid ${line};
    background: ${bar};
`

const Collapse = styled.button`
    display: grid;
    place-items: center;
    align-self: center;
    width: 50px;
    height: 8px;
    flex: none;
    margin-bottom: 6px;
    border: 1px solid ${line};
    border-top: 0;
    background: ${bar};
`

const Totals = styled.div`
    display: flex;
    flex: none;
    padding: 9px 0 8px;
    dl { margin-left: 120px; padding-top: 4px; }
    dl + dl { margin-left: 145px; }
    dl div { display: flex; height: 23px; align-items: center; }
    dt { width: 150px; font-weight: bold; }
    dd { width: 59px; text-align: right; }
    dl + dl dd { width: 86px; }
`

const TotalButtons = styled.div`
    display: grid;
    gap: 6px;
    width: 120px;
    button {
        height: 23px;
        border: 1px solid ${line};
        background: ${bar};
    }
`

const DialogStatus = styled.div`
    display: flex;
    justify-content: space-between;
    align-items: center;
    height: 23px;
    flex: none;
    padding-left: 4px;
    background: ${bar};
    svg { align-self: flex-end; }
`

const StatusBar = styled.footer`
    display: flex;
    align-items: center;
    gap: 2px;
    height: 23px;
    flex: none;
    padding-left: 2px;
    background: ${bar};
`

const Pane = styled.div`
    display: flex;
    align-items: center;
    gap: 2px;
    height: 19px;
    padding: 0 1px;
    border: 1px solid ${line};
    white-space: nowrap;
    overflow: hidden;
    ${(p) => (p.$fill ? 'flex: 1;' : `width: ${p.$w}px; flex: none;`)}
`

const TaskBar = styled.div`
    display: flex;
    gap: 3px;
    height: 8px;
    flex: none;
    padding-left: 14px;
    border-top: 1px solid #0C1B36;
    background: linear-gradient(90deg, #16346E, #2F5FA8 25%, #2A5297 50%, #2D5DA8 65%, #1E4488 75%, #162E62);
    overflow: hidden;
`

const Orb = styled.span`
    width: 28px;
    height: 28px;
    margin: 1px 14px 0 0;
    border-radius: 50%;
    background: #8FB3D0;
`

const Task = styled.span`
    width: 60px;
    height: 40px;
    border: 1px solid #A9BEDC;
    border-radius: 3px;
    background: radial-gradient(circle at 50% 16px, ${(p) => p.$c} 14px, ${(p) => (p.$lit ? '#E2E6EC' : p.$sky ? '#2C7FC0' : '#6883AE')} 15px);
`
